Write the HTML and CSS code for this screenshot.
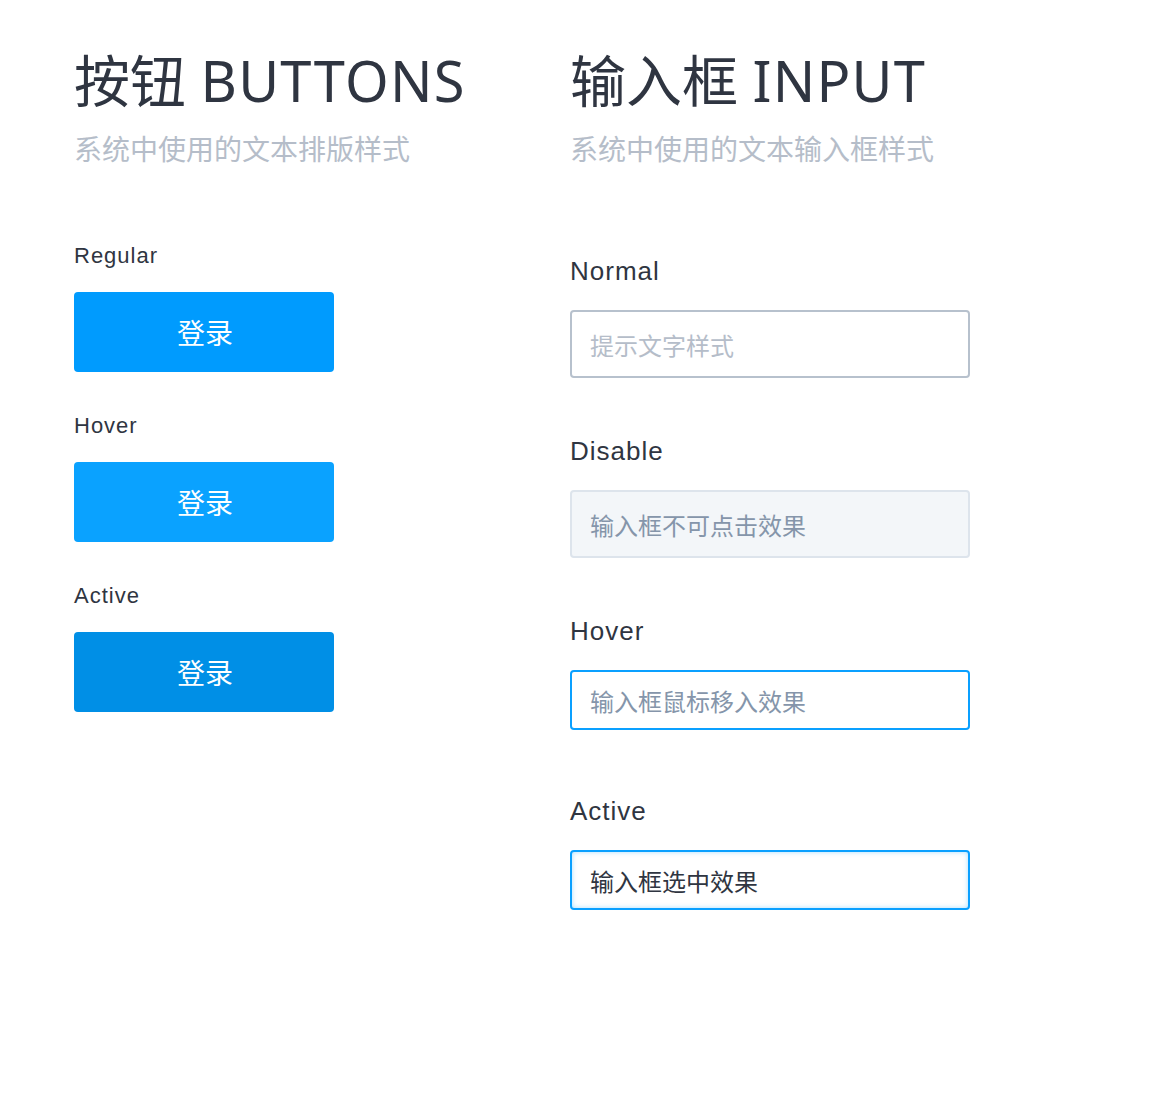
FILE: index.html
```html
<!DOCTYPE html>
<html lang="zh-CN">
<head>
<meta charset="utf-8">
<title>按钮 BUTTONS / 输入框 INPUT</title>
<link rel="stylesheet" href="styles.css">
</head>
<body>
<main class="page">
  <section class="col col-buttons">
    <h1 class="title">按钮 <span class="title-en">BUTTONS</span></h1>
    <p class="subtitle">系统中使用的文本排版样式</p>
    <div class="btn-group">
      <div class="label label-first">Regular</div>
      <button class="btn btn-regular" type="button">登录</button>
      <div class="label">Hover</div>
      <button class="btn btn-hover" type="button">登录</button>
      <div class="label">Active</div>
      <button class="btn btn-active" type="button">登录</button>
    </div>
  </section>
  <section class="col col-inputs">
    <h1 class="title">输入框 <span class="title-en">INPUT</span></h1>
    <p class="subtitle">系统中使用的文本输入框样式</p>
    <div class="input-group">
      <div class="ilabel ilabel-first">Normal</div>
      <input class="field field-normal" type="text" placeholder="提示文字样式">
      <div class="ilabel">Disable</div>
      <input class="field field-disabled" type="text" placeholder="输入框不可点击效果" disabled>
      <div class="ilabel">Hover</div>
      <input class="field field-hover" type="text" placeholder="输入框鼠标移入效果">
      <div class="ilabel ilabel-last">Active</div>
      <input class="field field-active" type="text" value="输入框选中效果">
    </div>
  </section>
</main>
</body>
</html>
```

FILE: styles.css
```css
* { box-sizing: border-box; }

html, body {
  margin: 0;
  padding: 0;
  background: #ffffff;
}

body {
  font-family: "Liberation Sans", "Noto Sans CJK SC", sans-serif;
  color: #333a45;
}

.page {
  display: flex;
  padding: 52px 0 0 74px;
}

.col {
  display: flex;
  flex-direction: column;
}

.col-buttons { width: 496px; }
.col-inputs { width: 400px; }

.title {
  margin: 0;
  font-family: "Noto Sans", "Noto Sans CJK SC", sans-serif;
  font-weight: 400;
  font-size: 56px;
  line-height: 56px;
  color: #2f3541;
  white-space: nowrap;
}

.title-en { letter-spacing: 1.2px; }

.subtitle {
  margin: 26px 0 0;
  font-family: "Noto Sans CJK SC", sans-serif;
  font-size: 28px;
  line-height: 28px;
  color: #b5bdc9;
  white-space: nowrap;
}

.btn-group,
.input-group {
  display: flex;
  flex-direction: column;
}

.label {
  margin-top: 42px;
  font-size: 22px;
  line-height: 24px;
  letter-spacing: 1px;
  color: #2f3541;
}

.label-first { margin-top: 82px; }

.btn {
  margin-top: 24px;
  width: 260px;
  height: 80px;
  border: none;
  border-radius: 4px;
  padding: 0 0 0 2px;
  font-family: "Noto Sans CJK SC", sans-serif;
  font-size: 28px;
  color: #ffffff;
  cursor: pointer;
}

.btn-regular { background: #009bfe; }
.btn-hover { background: #0aa2ff; }
.btn-active { background: #008fe6; }

.ilabel {
  margin-top: 58px;
  font-size: 26px;
  line-height: 30px;
  letter-spacing: 1px;
  color: #2f3541;
}

.ilabel-first { margin-top: 94px; }
.ilabel-last { margin-top: 66px; }

.field {
  margin-top: 24px;
  width: 400px;
  height: 68px;
  padding: 0 0 0 18px;
  border: 2px solid #b7c1cd;
  border-radius: 4px;
  background: #ffffff;
  font-family: "Noto Sans CJK SC", sans-serif;
  font-size: 24px;
  color: #2f3541;
  outline: none;
}

.field::placeholder { color: #b5bdc9; opacity: 1; }

.field-disabled {
  background: #f3f6f9;
  border-color: #dde4ec;
}

.field-disabled::placeholder { color: #8595aa; }

.field-hover {
  height: 60px;
  border-color: #0aa0ff;
}

.field-hover::placeholder { color: #8595aa; }

.field-active {
  height: 60px;
  border-color: #0aa0ff;
  box-shadow: inset 0 0 5px rgba(10, 160, 255, 0.35);
  color: #2f3541;
}
```
